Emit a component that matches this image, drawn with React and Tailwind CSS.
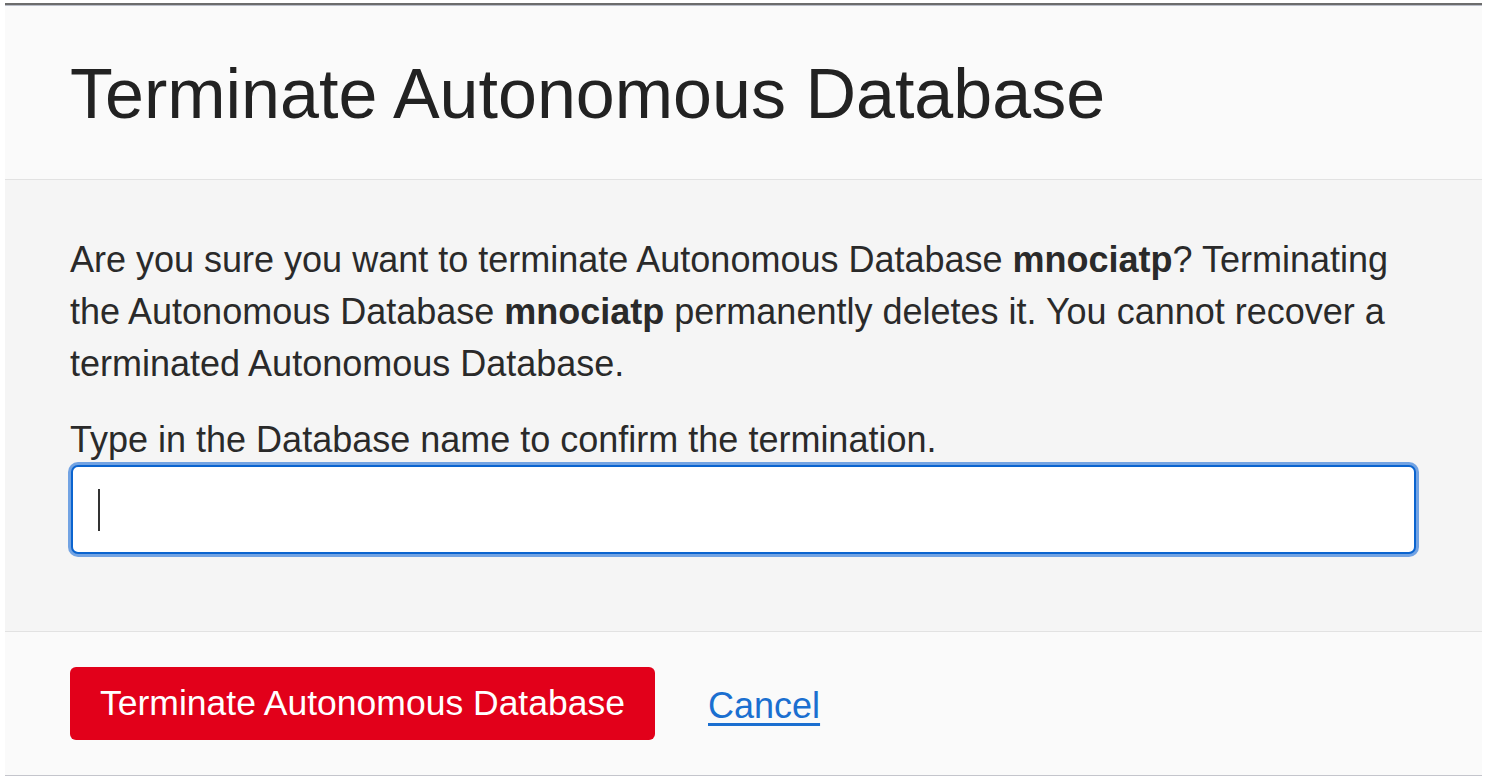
export default function App() {
  return (
    <div className="h-[780px] w-full bg-white font-['Liberation_Sans',Arial,sans-serif]">
      <div className="ml-[5px] w-[1477px] pt-[3px]">
        <div className="h-[2px] bg-[#6c6c6c]" />
        <div className="h-px bg-[#b9bdc8]" />

        <header className="h-[174px] border-b border-[#e2e2e2] bg-[#fafafa] pl-[65px] pt-[48px]">
          <h1 className="text-[70px] leading-[80px] text-[#222222]">Terminate Autonomous Database</h1>
        </header>

        <section className="border-b border-[#e2e2e2] bg-[#f5f5f5] pb-[77px] pl-[65px] pr-[66px] pt-[54px]">
          <p className="whitespace-nowrap text-[36px] leading-[52px] text-[#2a2a2a]">
            Are you sure you want to terminate Autonomous Database <b>mnociatp</b>? Terminating
            <br />
            the Autonomous Database <b>mnociatp</b> permanently deletes it. You cannot recover a
            <br />
            terminated Autonomous Database.
          </p>
          <p className="mt-[25px] whitespace-nowrap text-[36px] leading-[50px] text-[#2a2a2a]">
            Type in the Database name to confirm the termination.
          </p>
          <div className="ml-px flex h-[89px] items-center rounded-[7px] border-2 border-[#0b64cf] bg-white pl-[25px] shadow-[0_0_0_3px_#72a3e3]">
            <span className="h-[42px] w-[2px] bg-[#333333]" />
          </div>
        </section>

        <footer className="flex items-center border-b border-[#c4c5cc] bg-[#fafafa] pb-[35px] pl-[65px] pt-[35px]">
          <button className="flex h-[73px] w-[585px] items-center justify-center rounded-[6px] bg-[#e2001a] text-[35.5px] text-white">
            Terminate Autonomous Database
          </button>
          <a href="#" className="ml-[53px] pt-[4px] text-[36px] text-[#1b6fd0] underline underline-offset-[5px]">
            Cancel
          </a>
        </footer>
      </div>
    </div>
  );
}
